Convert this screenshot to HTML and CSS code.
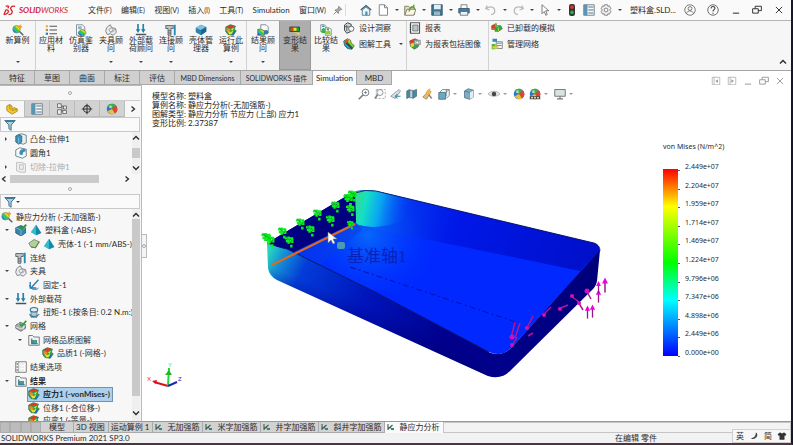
FILE: index.html
```
<!DOCTYPE html>
<html lang="zh-CN">
<head>
<meta charset="utf-8">
<title>SOLIDWORKS Premium 2021</title>
<link rel="stylesheet" href="styles.css">
</head>
<body>
<svg class="defs" aria-hidden="true">
<defs>
<linearGradient id="rainbow" x1="0" y1="1" x2="1" y2="0"><stop offset="0.1" stop-color="#1540e0"/><stop offset="0.35" stop-color="#19c8c0"/><stop offset="0.5" stop-color="#35c82a"/><stop offset="0.7" stop-color="#f5e51c"/><stop offset="0.95" stop-color="#ea2a16"/></linearGradient>
<symbol id="lens" viewBox="0 0 16 16"><circle cx="6" cy="7" r="5" fill="url(#rainbow)" stroke="#7a8a96"/><path d="M10 10l5 5" stroke="#5a6670" stroke-width="2.2"/><path d="M11 1v5M8.500 3.500h5" stroke="#eba51e" stroke-width="2"/></symbol>
<symbol id="material" viewBox="0 0 16 16"><path d="M1 1.500h3v3H1z" fill="#f0b72d"/><path d="M1 6.500h3v3H1z" fill="#b4903c"/><path d="M1 11.500h3v3H1z" fill="#2b83b5"/><path d="M6 3h10M6 8h10M6 13h10" stroke="#555" stroke-width="1.500"/></symbol>
<symbol id="chart" viewBox="0 0 16 16"><path d="M2 1h8l3 3v11H2z" fill="#f5f7f8" stroke="#67757e"/><path d="M4 3h5v4H4z" fill="#86b7d0"/><path d="M4 12c2-5 7-6 9-3l2 3-3 3H7z" fill="url(#rainbow)" stroke="#426a40" stroke-width=".7"/></symbol>
<symbol id="fixture" viewBox="0 0 16 16"><path d="M2 5l5-4 2 4 5 1 1 5-4 4-4-2-4 1-2-4z" fill="#eceeef" stroke="#737b80" stroke-width="1.200"/><path d="M5 7l4-2 2 3-4 3zM7 11l4-1 2-3" fill="none" stroke="#8a9195"/></symbol>
<symbol id="load" viewBox="0 0 16 16"><path d="M4 0v9M11 0v9" stroke="#287fa9" stroke-width="2.200"/><path d="M1 7h6l-3 5zM8 7h6l-3 5z" fill="#287fa9"/><path d="M1 14h14" stroke="#46545c" stroke-width="2"/></symbol>
<symbol id="bolt" viewBox="0 0 16 16"><path d="M1 2h10v4H8v9H4V6H1z" fill="#bcc1c4" stroke="#454d52"/><path d="M4 9h4M4 12h4" stroke="#454d52"/><path d="M13 1v14" stroke="#2a8ab4" stroke-width="2.500"/></symbol>
<symbol id="shell" viewBox="0 0 16 16"><path d="M1 5l7-4 7 3v6l-7 5-7-4z" fill="#2c84ae"/><path d="M1 5l7-4 7 3-7 4z" fill="#83c3df"/><path d="M8 8l7-4v6l-7 5z" fill="#1b668f"/></symbol>
<symbol id="run" viewBox="0 0 16 16"><path d="M1 4l6-3 7 2-2 4 3 2-4 6-7-1-3-4z" fill="#2aa845" stroke="#31694c"/><path d="M2 4l6-3 5 2-6 3z" fill="#e33626"/><path d="M2 5l5 2v4l-5-2z" fill="#f0872a"/><path d="M3 9l4 2 4-2-1 4-4 1z" fill="#e6e22f"/><path d="M8 7l4-2-2 4z" fill="#f4e32c"/><path d="M11 10h3l-3 5-2-1z" fill="#1d6fc0"/></symbol>
<symbol id="advisor" viewBox="0 0 16 16"><path d="M5 1h7l3 3v8H5z" fill="#f8fafb" stroke="#5d7883"/><path d="M1 7h4l5 2v6H1z" fill="url(#rainbow)" stroke="#536d5e"/><circle cx="12" cy="11" r="3" fill="#2e7ea5"/></symbol>
<symbol id="deform" viewBox="0 0 16 16"><path d="M1 4h13v6H1z" fill="#1e9b35" stroke="#333"/><path d="M2 5h4v4H2z" fill="#ef3824"/><path d="M6 5h4v4H6z" fill="#f4e32c"/><path d="M6 11l8 1v3z" fill="#f3d832"/></symbol>
<symbol id="compare" viewBox="0 0 16 16"><path d="M1 1h5l2 2v7H1z" fill="#fff" stroke="#627682"/><path d="M7 5h5l3 2v8H7z" fill="#fff" stroke="#627682"/><path d="M2 7l3-2 2 2v5H2z" fill="#39b24e"/><path d="M8 10l3-2 3 2v4H8z" fill="#9ac93a"/><path d="M3 3h3M9 7h3" stroke="#3086ad" stroke-width="2"/></symbol>
<symbol id="insight" viewBox="0 0 16 16"><path d="M2 4l4-3 5 2-1 10-5 2-3-4z" fill="#cfd4d7" stroke="#44494d" stroke-width="1.300"/><path d="M5 4v8M2 6l8 1" stroke="#44494d"/><circle cx="11" cy="9" r="3.500" fill="#fafafa" stroke="#444"/></symbol>
<symbol id="plot" viewBox="0 0 16 16"><path d="M1 4l5-3 4 2 1 4 4 3-3 5-6-1-4-4z" fill="url(#rainbow)" stroke="#37564a"/><path d="M4 6l8 8" stroke="#34454e" stroke-width="2.500"/><path d="M1 5l5-3 2 2-4 3z" fill="#e74828"/></symbol>
<symbol id="report" viewBox="0 0 16 16"><path d="M2 1h12v14H2z" fill="#fff" stroke="#555" stroke-width="1.500"/><path d="M5 4h7v8H5z" fill="#bcc3c7" stroke="#59656b"/><path d="M1 4h2M1 7h2M1 10h2M1 13h2" stroke="#333"/></symbol>
<symbol id="snap" viewBox="0 0 16 16"><path d="M1 4l7-3 6 3-2 8-5 3-5-4z" fill="#2aa845" stroke="#586d5f"/><path d="M1 4l6-3v5L2 8z" fill="#e33626"/><path d="M2 8l4-2 1 5-4 1z" fill="#f0d62c"/><path d="M7 3h8v6H7z" fill="#d8dcdf" stroke="#777"/><circle cx="11" cy="6" r="2" fill="#fff" stroke="#777"/></symbol>
<symbol id="offload" viewBox="0 0 16 16"><path d="M1 5l6-3v3h6l2 4-6 4v-3H1z" fill="#f4e32c" stroke="#4d6a2c"/><path d="M1 5l5-2v6H1z" fill="#e33626"/><path d="M5 6h4v7H5z" fill="#24a64c"/><path d="M9 5h4l2 4-4 3z" fill="#2da858"/></symbol>
<symbol id="network" viewBox="0 0 16 16"><path d="M2 1h6v4H2z" fill="#2e8bb4"/><path d="M7 5h8v9H7z" fill="#f9fafb" stroke="#5c686e"/><path d="M8 7h6M8 10h6" stroke="#5c686e"/><path d="M1 8h5v7H1z" fill="#52b444"/><path d="M2 11h8v3H2z" fill="#e9ce2d"/></symbol>
<symbol id="home" viewBox="0 0 16 16"><path d="M1 8l7-6 7 6" fill="none" stroke="#345c75" stroke-width="1.600"/><path d="M3 8v7h10V8L8 4z" fill="#eef4f7" stroke="#345c75"/><path d="M7 10h3v5H7z" fill="#4895b8"/></symbol>
<symbol id="doc" viewBox="0 0 16 16"><path d="M3 1h7l4 4v10H3z" fill="#fff" stroke="#60666a"/><path d="M10 1v4h4" fill="none" stroke="#60666a"/></symbol>
<symbol id="open" viewBox="0 0 16 16"><path d="M1 3h5l2 2h6v9H1z" fill="#ece1b7" stroke="#635e4c"/><path d="M4 7h12l-3 8H1z" fill="#fbf8e7" stroke="#635e4c"/><path d="M7 10c0-5 3-7 6-6V1" fill="none" stroke="#5fa42d" stroke-width="2"/></symbol>
<symbol id="save" viewBox="0 0 16 16"><path d="M1 1h14v14H1z" fill="#3b7997" stroke="#27495c"/><path d="M4 1h9v6H4z" fill="#e4edf2"/><path d="M4 10h8v5H4z" fill="#9db5c1"/></symbol>
<symbol id="print" viewBox="0 0 16 16"><path d="M4 1h8v6H4z" fill="#fff" stroke="#54646d"/><path d="M1 6h14v6H1z" fill="#447f9e" stroke="#2f4c5d"/><path d="M3 10h10v5H3z" fill="#edf2f4" stroke="#54646d"/></symbol>
<symbol id="undo" viewBox="0 0 16 16"><path d="M3 2L1 6l5 2M1 6c6-4 12-2 12 3 0 3-2 5-5 5" fill="none" stroke="#b8bbbd" stroke-width="1.700"/></symbol>
<symbol id="redo" viewBox="0 0 16 16"><path d="M13 2l2 4-5 2M15 6C9 2 3 4 3 9c0 3 2 5 5 5" fill="none" stroke="#b8bbbd" stroke-width="1.700"/></symbol>
<symbol id="cursor" viewBox="0 0 16 16"><path d="M4 1v12l3-3 2 5 2-1-2-5h4z" fill="#fff" stroke="#555"/></symbol>
<symbol id="light" viewBox="0 0 16 16"><rect x="4" y="0" width="8" height="16" rx="3" fill="#333"/><circle cx="8" cy="4" r="2.500" fill="#e83328"/><circle cx="8" cy="11" r="2.500" fill="#28ae48"/></symbol>
<symbol id="list" viewBox="0 0 16 16"><path d="M1 1h14v14H1z" fill="#f8fafb" stroke="#4f6571"/><path d="M1 1h5v14H1z" fill="#5a96b4"/><path d="M7 4h7M7 8h7M7 12h7" stroke="#527382" stroke-width="1.400"/></symbol>
<symbol id="gear" viewBox="0 0 16 16"><path d="M6 1h4l.5 2 2-.5 2 3.500-1.500 2 1.500 2-2 3.500-2-.5L10 15H6l-.5-2-2 .5-2-3.500L3 8 1.500 6l2-3.500 2 .5z" fill="#eee" stroke="#666"/><circle cx="8" cy="8" r="2.500" fill="#fff" stroke="#666"/></symbol>
<symbol id="user" viewBox="0 0 16 16"><circle cx="8" cy="8" r="7" fill="none" stroke="#555"/><circle cx="8" cy="6" r="2.500" fill="none" stroke="#555"/><path d="M3.500 13c0-5 9-5 9 0" fill="none" stroke="#555"/></symbol>
<symbol id="help" viewBox="0 0 16 16"><circle cx="8" cy="8" r="7" fill="none" stroke="#444"/><path d="M5.500 6c0-4 5.500-3 5 0-.3 1.500-2.500 2-2.500 4M8 11.500V13" fill="none" stroke="#444" stroke-width="1.500"/></symbol>
<symbol id="min" viewBox="0 0 16 16"><path d="M3 13h10" stroke="currentColor" stroke-width="1.600"/></symbol>
<symbol id="restore" viewBox="0 0 16 16"><path d="M1 6h9v7H1zM5 6V2h10v7h-5" fill="none" stroke="currentColor" stroke-width="1.500"/></symbol>
<symbol id="close" viewBox="0 0 16 16"><path d="M3 3l10 10M13 3L3 13" stroke="currentColor" stroke-width="1.500"/></symbol>
<symbol id="paneL" viewBox="0 0 16 16"><path d="M2 2h12v12H2zM5 2v12" fill="none" stroke="currentColor"/><path d="M11 5v6L7 8z" fill="currentColor"/></symbol>
<symbol id="paneR" viewBox="0 0 16 16"><path d="M2 2h12v12H2zM5 2v12" fill="none" stroke="currentColor"/><path d="M7 5v6l4-3z" fill="currentColor"/></symbol>
<symbol id="pin" viewBox="0 0 16 16"><path d="M9 2l5 5-2 .5-3 3-.5 3L3 8l3-.5 3-3zM5 11l-4 4" fill="#aaa" stroke="#777" stroke-width="1.300"/></symbol>
<symbol id="up" viewBox="0 0 8 8"><path d="M1 5.500L4 2.500l3 3" fill="none" stroke="currentColor" stroke-width="1.400"/></symbol>
<symbol id="down" viewBox="0 0 8 8"><path d="M1 2.500l3 3 3-3" fill="none" stroke="currentColor" stroke-width="1.400"/></symbol>
<symbol id="left" viewBox="0 0 8 8"><path d="M5.500 1.500l-3 2.500 3 2.500" fill="none" stroke="currentColor" stroke-width="1.300"/></symbol>
<symbol id="right" viewBox="0 0 8 8"><path d="M2.500 1.500l3 2.500-3 2.500" fill="none" stroke="currentColor" stroke-width="1.300"/></symbol>
<symbol id="funnel" viewBox="0 0 16 16"><path d="M1 2h14L9.500 8v7l-3-2V8z" fill="#a9d0e1" stroke="#396a83" stroke-width="1.200"/><path d="M2 2h12v2H3z" fill="#3c7d9c"/></symbol>
<symbol id="part" viewBox="0 0 16 16"><path d="M1 4l4-2 3 2v4l3-2 4 2v3l-7 4-7-5z" fill="#f5c62b" stroke="#9f7d1c"/><path d="M5 2v5l3 3 7-2" fill="none" stroke="#9f7d1c"/></symbol>
<symbol id="config" viewBox="0 0 16 16"><path d="M2 1h5v5H2zM2 9h5v6H2zM10 4h4v4h-4zM9 10h5v4H9z" fill="#eee" stroke="#555"/><path d="M7 4h3M8 4v8" stroke="#555"/></symbol>
<symbol id="target" viewBox="0 0 16 16"><circle cx="8" cy="8" r="4.500" fill="none" stroke="#333" stroke-width="1.400"/><path d="M8 1v14M1 8h14" stroke="#333" stroke-width="1.400"/></symbol>
<symbol id="ball" viewBox="0 0 16 16"><circle cx="8" cy="8" r="7" fill="#2f77c6"/><path d="M8 8L2 4c2-4 9-4 11-1z" fill="#38af52"/><path d="M8 8l5-5c4 5 2 9-1 11z" fill="#e3442e"/><path d="M8 8l4 6c-4 2-8 0-10-3z" fill="#efbf2e"/><circle cx="6" cy="5" r="2" fill="#fff" opacity=".55"/></symbol>
<symbol id="boss" viewBox="0 0 16 16"><path d="M5 2l4-1 6 2v10l-4 2-6-2z" fill="#e9eff2" stroke="#4b6572"/><path d="M1 4l4-2 4 2v8l-4 3-4-3z" fill="#3d91b6" stroke="#275c75"/><path d="M5 6v8" stroke="#9acbe0"/></symbol>
<symbol id="fillet" viewBox="0 0 16 16"><path d="M1 4l5-3 9 2v9l-5 3-9-3z" fill="#f7f9fa" stroke="#4a6470"/><path d="M6 7c0-4 5-5 8-4v3c-3 0-4 2-4 5L6 10z" fill="#398fb6"/></symbol>
<symbol id="cut" viewBox="0 0 16 16"><path d="M2 2h7l5 2v11H7l-5-2zM6 5h5v6H6z" fill="#eee" stroke="#b5b5b5"/></symbol>
<symbol id="body" viewBox="0 0 16 16"><path d="M1 5l7-3 6 3v7l-6 4-7-4z" fill="#3688ae" stroke="#234c60"/><path d="M1 5l7 3 6-3M8 8v7" fill="none" stroke="#8fc1d5"/><path d="M6 4l3 3 6-6" fill="none" stroke="#22a13a" stroke-width="2.500"/></symbol>
<symbol id="tetra" viewBox="0 0 16 16"><path d="M8 1l7 11-7 3-7-4z" fill="#36b8cd"/><path d="M8 1v14l7-3z" fill="#1788a5"/></symbol>
<symbol id="sheet" viewBox="0 0 16 16"><path d="M1 7l7-5 7 3-5 8-6-1z" fill="#b2cf9d" stroke="#637f55"/><path d="M4 12l6 1 5-8" fill="none" stroke="#637f55" stroke-width="1.500"/></symbol>
<symbol id="fix" viewBox="0 0 16 16"><path d="M14 1L4 12M3 4v8h8" fill="none" stroke="#287eab" stroke-width="1.800"/><path d="M2 8c1 6 8 8 12 4" fill="none" stroke="#287eab" stroke-width="1.300"/></symbol>
<symbol id="torque" viewBox="0 0 16 16"><path d="M4 6h8v9H4z" fill="#b9c9d2" stroke="#4c626e"/><ellipse cx="8" cy="5" rx="5" ry="3" fill="#e5edf1" stroke="#2a789f" stroke-width="1.500"/><path d="M2 11c2 4 10 4 13 0" fill="none" stroke="#2a789f" stroke-width="1.500"/></symbol>
<symbol id="mesh" viewBox="0 0 16 16"><path d="M1 7l6-4 7 3v5l-6 4-7-4z" fill="#a7acaf" stroke="#555"/><path d="M1 9l7 3 6-4M4 5l7 3v5" stroke="#eee" fill="none"/><path d="M6 5l3 3 6-7" fill="none" stroke="#22a13a" stroke-width="2.300"/></symbol>
<symbol id="folder" viewBox="0 0 16 16"><path d="M1 2h5l2 2h7v11H1z" fill="#f2f3f4" stroke="#565b5f"/><path d="M5 8h7v5H5z" fill="#4d9a8c"/><path d="M5 6v7h8" stroke="#30718d" fill="none" stroke-width="1.500"/></symbol>
<symbol id="options" viewBox="0 0 16 16"><path d="M1 1h14v14H1z" fill="#fff" stroke="#555"/><path d="M5 1v14" stroke="#888"/><path d="M2 4h2M2 8h2M2 12h2" stroke="#444" stroke-width="1.500"/><path d="M7 4h5M7 8h5M7 12h5" stroke="#ccc"/></symbol>
<symbol id="zoomfit" viewBox="0 0 16 16"><circle cx="10" cy="6" r="4.500" fill="#f7fafb" stroke="#767e83" stroke-width="1.300"/><path d="M7 9l-6 6" stroke="#767e83" stroke-width="2.200"/><path d="M8 6h4M10 4v4" stroke="#767e83"/></symbol>
<symbol id="zoomarea" viewBox="0 0 16 16"><path d="M3 2h12v12H3z" fill="none" stroke="#999" stroke-dasharray="3 2"/><circle cx="8" cy="6" r="4" fill="#f7fafb" stroke="#767e83"/><path d="M5 9l-4 5" stroke="#767e83" stroke-width="2"/></symbol>
<symbol id="prev" viewBox="0 0 16 16"><path d="M1 11L12 2l2 2-7 10z" fill="#dce3e6" stroke="#7a8387"/><path d="M7 11h7M10 8l-3 3 3 3" stroke="#3d8ca6" fill="none" stroke-width="1.400"/></symbol>
<symbol id="section" viewBox="0 0 16 16"><path d="M1 4l4-2v10l-4 2zM9 4l5-2v9l-5 3z" fill="#418da5" stroke="#506b77"/><path d="M5 3h4v10H5z" fill="#cad5d9" stroke="#506b77"/></symbol>
<symbol id="dyn" viewBox="0 0 16 16"><path d="M1 12l9-9 2 2-6 10z" fill="#e4bc83" stroke="#907856"/><path d="M9 1l-5 6h4l-2 5 7-7H9l3-4z" fill="#f2b542"/><path d="M9 9l4 5" stroke="#888" stroke-width="2"/></symbol>
<symbol id="orient" viewBox="0 0 16 16"><path d="M2 6l4-4h9v8l-4 4" fill="#f2f5f6" stroke="#5b7480"/><path d="M1 6h9v9H1z" fill="#6aa9c4" stroke="#4a6674"/><path d="M10 6l5-4M11 2v9" fill="none" stroke="#5b7480"/></symbol>
<symbol id="cube" viewBox="0 0 16 16"><path d="M2 4l5-3 7 2v9l-5 3-7-2z" fill="#79b0c8" stroke="#536b76"/><path d="M2 4l7 2 5-3M9 6v9" fill="none" stroke="#536b76"/><path d="M9 6l5-3v9l-5 3z" fill="#e2edf2"/></symbol>
<symbol id="eye" viewBox="0 0 16 16"><path d="M0 8c4-5 12-5 16 0-4 4-12 4-16 0z" fill="#e5e7e8" stroke="#a3a6a8"/><circle cx="8" cy="8" r="3" fill="#424a50"/></symbol>
<symbol id="scene" viewBox="0 0 16 16"><use href="#ball"/><path d="M1 11h14v4H1z" fill="#444"/><path d="M3 13h2M7 13h2M11 13h2" stroke="#fff" stroke-width="2"/></symbol>
<symbol id="screen" viewBox="0 0 16 16"><path d="M1 2h14v9H1z" fill="#dce2e4" stroke="#70777b" stroke-width="1.300"/><path d="M8 11v3M4 14.500h8" stroke="#70777b" stroke-width="1.500"/></symbol>
<symbol id="study" viewBox="0 0 16 16"><path d="M2 2v12M2 12l9-8M6 8l5 6" stroke="#355d55" stroke-width="2.200"/><path d="M8 10h6v4H8z" fill="#2b8b82"/></symbol>
</defs>
</svg>

<div class="app">
  <header class="menubar">
    <svg class="logo" viewBox="0 0 14 13" role="img" aria-label="DS"><path d="M3 2c3-1 4 0 2 2M1 11l2-5c4-1 4 4-2 5M13 2c-4-1-6 2-4 4s1 5-3 5" fill="none" stroke="#d5202b" stroke-width="1.400"/></svg>
    <span class="brand"><b>SOLID</b>WORKS</span>
    <nav class="menus">
      <button>文件<small>(F)</small></button><button>编辑<small>(E)</small></button><button>视图<small>(V)</small></button><button>插入<small>(I)</small></button><button>工具<small>(T)</small></button><button>Simulation</button><button>窗口<small>(W)</small></button>
    </nav>
    <svg class="i10"><use href="#pin"/></svg>
    <div class="quick">
      <button aria-label="主页"><svg class="i12"><use href="#home"/></svg></button>
      <button class="drop" aria-label="新建"><svg class="i12"><use href="#doc"/></svg></button>
      <button class="drop" aria-label="打开"><svg class="i12"><use href="#open"/></svg></button>
      <button class="drop" aria-label="保存"><svg class="i12"><use href="#save"/></svg></button>
      <button class="drop" aria-label="打印"><svg class="i12"><use href="#print"/></svg></button>
      <button class="drop" aria-label="撤销"><svg class="i12"><use href="#undo"/></svg></button>
      <button class="drop" aria-label="重做"><svg class="i12"><use href="#redo"/></svg></button>
      <button class="drop" aria-label="选择"><svg class="i12"><use href="#cursor"/></svg></button>
      <button aria-label="重建模型"><svg class="i12"><use href="#light"/></svg></button>
      <button aria-label="文件属性"><svg class="i12"><use href="#list"/></svg></button>
      <button class="drop" aria-label="选项"><svg class="i12"><use href="#gear"/></svg></button>
    </div>
    <span class="filename">塑料盒.SLD...</span>
    <div class="window">
      <button aria-label="用户"><svg class="i12"><use href="#user"/></svg></button>
      <button aria-label="帮助"><svg class="i12"><use href="#help"/></svg></button>
      <button aria-label="最小化"><svg class="i10"><use href="#min"/></svg></button>
      <button aria-label="还原"><svg class="i10"><use href="#restore"/></svg></button>
      <button aria-label="关闭"><svg class="i10"><use href="#close"/></svg></button>
    </div>
  </header>

  <section class="ribbon" aria-label="Simulation">
    <div class="group first">
      <button class="tool more"><svg class="i12"><use href="#lens"/></svg><span>新算例</span></button>
    </div>
    <div class="group">
      <button class="tool"><svg class="i12"><use href="#material"/></svg><span>应用材料</span></button>
      <button class="tool"><svg class="i12"><use href="#chart"/></svg><span>仿真鉴别器</span></button>
      <button class="tool more"><svg class="i12"><use href="#fixture"/></svg><span>夹具顾问</span></button>
      <button class="tool more"><svg class="i12"><use href="#load"/></svg><span>外部载荷顾问</span></button>
      <button class="tool more"><svg class="i12"><use href="#bolt"/></svg><span>连接顾问</span></button>
      <button class="tool"><svg class="i12"><use href="#shell"/></svg><span>壳体管理器</span></button>
      <button class="tool more"><svg class="i12"><use href="#run"/></svg><span>运行此算例</span></button>
    </div>
    <div class="group last">
      <button class="tool more"><svg class="i12"><use href="#advisor"/></svg><span>结果顾问</span></button>
      <button class="tool on"><svg class="i12"><use href="#deform"/></svg><span>变形结果</span></button>
      <button class="tool"><svg class="i12"><use href="#compare"/></svg><span>比较结果</span></button>
      <div class="pair">
        <button><svg class="i12"><use href="#insight"/></svg>设计洞察</button>
        <button class="drop"><svg class="i12"><use href="#plot"/></svg>图解工具</button>
      </div>
    </div>
    <div class="group pair wide">
      <button><svg class="i12"><use href="#report"/></svg>报表</button>
      <button><svg class="i12"><use href="#snap"/></svg>为报表包括图像</button>
    </div>
    <div class="pair">
      <button><svg class="i12"><use href="#offload"/></svg>已卸载的模拟</button>
      <button><svg class="i12"><use href="#network"/></svg>管理网络</button>
    </div>
    <button class="collapse" aria-label="折叠"><svg class="i8"><use href="#up"/></svg></button>
  </section>

  <div class="tabrow">
    <nav class="tabs">
      <button>特征</button><button>草图</button><button>曲面</button><button>标注</button><button>评估</button><button class="t-dim">MBD Dimensions</button><button class="t-add">SOLIDWORKS 插件</button><button class="t-sim on">Simulation</button><button>MBD</button>
    </nav>
    <div class="docwin">
      <button aria-label="左窗格"><svg class="i10"><use href="#paneL"/></svg></button>
      <button aria-label="右窗格"><svg class="i10"><use href="#paneR"/></svg></button>
      <button aria-label="最小化文档"><svg class="i10"><use href="#min"/></svg></button>
      <button aria-label="还原文档"><svg class="i10"><use href="#restore"/></svg></button>
      <button aria-label="关闭文档"><svg class="i10"><use href="#close"/></svg></button>
    </div>
  </div>

  <main class="work">
    <aside class="side">
      <div class="grip"><i></i></div>
      <nav class="modes">
        <button class="on" aria-label="特征树"><svg class="i12"><use href="#part"/></svg></button>
        <button aria-label="属性"><svg class="i12"><use href="#list"/></svg></button>
        <button aria-label="配置"><svg class="i12"><use href="#config"/></svg></button>
        <button aria-label="尺寸"><svg class="i12"><use href="#target"/></svg></button>
        <button aria-label="外观"><svg class="i12"><use href="#ball"/></svg></button>
        <button class="next" aria-label="更多"><svg class="i8"><use href="#right"/></svg></button>
      </nav>
      <label class="filter"><svg class="i12"><use href="#funnel"/></svg><input type="text" aria-label="过滤特征"></label>
      <div class="pane upper">
        <ul class="tree">
          <li class="l1 shut"><svg class="i12"><use href="#boss"/></svg>凸台-拉伸1</li>
          <li class="l1"><svg class="i12"><use href="#fillet"/></svg>圆角1</li>
          <li class="l1 shut dim"><svg class="i12"><use href="#cut"/></svg>切除-拉伸1</li>
        </ul>
        <div class="vscroll"><svg class="i8"><use href="#up"/></svg><i></i><svg class="i8"><use href="#down"/></svg></div>
      </div>
      <div class="hscroll"><svg class="i8"><use href="#left"/></svg><i></i><svg class="i8"><use href="#right"/></svg></div>
      <div class="grip slim"><i></i></div>
      <label class="filter drop"><svg class="i12"><use href="#funnel"/></svg><input type="text" aria-label="过滤算例"></label>
      <div class="pane lower">
        <ul class="tree">
          <li><svg class="i12"><use href="#lens"/></svg>静应力分析 (-无加强筋-)</li>
          <li class="l1 open"><svg class="i12"><use href="#body"/></svg><svg class="i12"><use href="#tetra"/></svg>塑料盒 (-ABS-)</li>
          <li class="l2"><svg class="i12"><use href="#sheet"/></svg><svg class="i12"><use href="#tetra"/></svg>壳体-1 (-1 mm/ABS-)</li>
          <li class="l1"><svg class="i12"><use href="#bolt"/></svg>连结</li>
          <li class="l1 open"><svg class="i12"><use href="#fixture"/></svg>夹具</li>
          <li class="l2"><svg class="i12"><use href="#fix"/></svg>固定-1</li>
          <li class="l1 open"><svg class="i12"><use href="#load"/></svg>外部载荷</li>
          <li class="l2"><svg class="i12"><use href="#torque"/></svg>扭矩-1 (:按条目: 0.2 N.m:)</li>
          <li class="l1 open"><svg class="i12"><use href="#mesh"/></svg>网格</li>
          <li class="l2 open"><svg class="i12"><use href="#folder"/></svg>网格品质图解</li>
          <li class="l3"><svg class="i12"><use href="#run"/></svg>品质1 (-网格-)</li>
          <li class="l1"><svg class="i12"><use href="#options"/></svg>结果选项</li>
          <li class="l1 open bold"><svg class="i12"><use href="#folder"/></svg>结果</li>
          <li class="l2 bold"><span class="sel"><svg class="i12"><use href="#run"/></svg>应力1 (-vonMises-)</span></li>
          <li class="l2"><svg class="i12"><use href="#run"/></svg>位移1 (-合位移-)</li>
          <li class="l2"><svg class="i12"><use href="#run"/></svg>应变1 (-等量-)</li>
        </ul>
        <div class="vscroll"><svg class="i8"><use href="#up"/></svg><i></i><svg class="i8"><use href="#down"/></svg></div>
      </div>
    </aside>

    <section class="view">
      <button class="handle" aria-label="收起面板"><i></i></button>
      <svg class="model" viewBox="142 85 649 336" role="img" aria-label="塑料盒应力云图">
        <defs>
          <linearGradient id="front" gradientUnits="userSpaceOnUse" x1="267" y1="255" x2="440" y2="345"><stop offset="0" stop-color="#27d5bd"/><stop offset=".07" stop-color="#1593d6"/><stop offset=".2" stop-color="#033cd8"/><stop offset=".55" stop-color="#0015bc"/><stop offset="1" stop-color="#00008c"/></linearGradient>
          <linearGradient id="shade" gradientUnits="userSpaceOnUse" x1="375" y1="308" x2="364" y2="336"><stop offset="0" stop-color="#000090" stop-opacity="0"/><stop offset="1" stop-color="#00006c" stop-opacity=".6"/></linearGradient>
          <linearGradient id="hot" gradientUnits="userSpaceOnUse" x1="354" y1="200" x2="412" y2="214"><stop offset="0" stop-color="#3ad98a"/><stop offset=".2" stop-color="#14e0c4"/><stop offset=".45" stop-color="#0abcf0" stop-opacity=".8"/><stop offset="1" stop-color="#0030ff" stop-opacity="0"/></linearGradient>
          <radialGradient id="glow" gradientUnits="userSpaceOnUse" cx="368" cy="235" r="75"><stop offset="0" stop-color="#0a7cf8" stop-opacity=".75"/><stop offset="1" stop-color="#0030ff" stop-opacity="0"/></radialGradient>
          <linearGradient id="wall" gradientUnits="userSpaceOnUse" x1="360" y1="200" x2="600" y2="262"><stop offset="0" stop-color="#0547f2"/><stop offset=".4" stop-color="#0018e8"/><stop offset="1" stop-color="#000fc8"/></linearGradient>
          <linearGradient id="end" gradientUnits="userSpaceOnUse" x1="490" y1="365" x2="598" y2="262"><stop offset="0" stop-color="#00008c"/><stop offset="1" stop-color="#000078"/></linearGradient>
          <symbol id="clamp" viewBox="0 0 12 14"><path d="M1 3h9M5 1v8M2 6h8M9 3v5M8 10v3" stroke="#0bec20" stroke-width="2.600"/><path d="M2 1l4 4M9 5l-3 4" stroke="#079d16" stroke-width="1"/></symbol>
          <symbol id="force" viewBox="0 0 8 16"><path d="M4 5v10" stroke="#9a168f" stroke-width="1.500"/><path d="M4 0l3 6H1z" fill="#ec00df"/></symbol>
        </defs>
        <path d="M267 243L350 194Q360 189 376 191L594 243Q600 245 600 251L512 347Q502 358 489 352Z" fill="#0028ff"/>
        <path d="M356 191Q367 189 376 191L594 243Q600 245 599 251L580 271L430 240Q380 232 357 222Z" fill="url(#wall)"/>
        <path d="M267 243L350 194Q360 189 376 191L500 220L480 300L370 290Z" fill="url(#glow)"/>
        <path d="M354 192Q367 189 376 191L420 201L410 218Q378 232 356 224Z" fill="url(#hot)"/>
        <path d="M267 243L350 194L355 193L356 222L292 253Z" fill="#000080"/>
        <path d="M292 253L356 222L362 230L320 265Z" fill="#0840df" opacity=".5"/>
        <path d="M267 243Q278 248 287 249L375 292L489 352L488 376L277 280Q269 276 268 268Z" fill="url(#front)"/>
        <path d="M269 267L489 352L488 376L277 280Q271 277 269 267Z" fill="url(#shade)"/>
        <path d="M488 352Q502 358 512 347L600 250L597 281Q596 287 590 292L510 371Q501 380 488 376Z" fill="url(#end)"/>
        <path d="M355 193Q365 189 376 191L594 243Q600 245 600 251M267 243L287 249L375 292L489 352" fill="none" stroke="#071356" stroke-width=".8"/>
        <path d="M350 267L516 322" stroke="#0710b0" stroke-dasharray="6 3 2 3"/>
        <path d="M272 265L355 224" stroke="#d96b20" stroke-width="2.200"/>
        <g><use href="#clamp" x="260" y="232" width="13" height="14"/><use href="#clamp" x="265" y="235" width="11" height="13"/><use href="#clamp" x="277" y="226" width="11" height="14"/><use href="#clamp" x="284" y="235" width="11" height="14"/><use href="#clamp" x="295" y="217" width="11" height="14"/><use href="#clamp" x="305" y="224" width="11" height="14"/><use href="#clamp" x="312" y="208" width="11" height="14"/><use href="#clamp" x="325" y="214" width="11" height="14"/><use href="#clamp" x="330" y="200" width="11" height="14"/><use href="#clamp" x="342" y="193" width="13" height="14"/><use href="#clamp" x="347" y="189" width="11" height="14"/><use href="#clamp" x="345" y="204" width="11" height="13"/><use href="#clamp" x="344" y="220" width="13" height="10"/></g>
        <text class="axis" x="347" y="262">基准轴1</text>
        <rect x="337" y="242" width="8" height="7" rx="2" fill="#4e9ab0"/>
        <path d="M328 232v11l3-3 2 4 2-1-2-4h4z" fill="#fff" stroke="#777" stroke-width=".6"/>
        <g><use href="#force" x="584" y="304" width="7" height="17"/><use href="#force" x="589" y="303" width="7" height="17"/><use href="#force" x="595" y="288" width="7" height="17"/><use href="#force" x="601" y="277" width="8" height="17"/><use href="#force" x="595" y="281" width="7" height="13"/></g>
        <g stroke="#b41494" stroke-width="1.500"><path d="M586 290l5 9M577 300l6 10M571 296l8 6M558 309l10-4M543 315l8-8M527 328l6-12M511 338l4-16M515 338l5-15M512 346l5-9M528 336l5-3"/></g>
        <g fill="#d011b6"><circle cx="587" cy="291" r="2.500"/><circle cx="579" cy="303" r="2"/><circle cx="572" cy="296" r="2"/><circle cx="560" cy="309" r="2"/><circle cx="544" cy="315" r="2"/><circle cx="527" cy="328" r="2"/><circle cx="512" cy="337" r="2.500"/><circle cx="512" cy="345" r="2"/></g>
        <g stroke-width="2"><path d="M168 386l-14-4" stroke="#d9121a"/><path d="M168 386l1-18" stroke="#27d532"/><path d="M168 386l9-4" stroke="#1a26b5"/></g>
        <path d="M165 375l4-5 3 5z" fill="#20b52a"/><path d="M152 381l5-1-1 4z" fill="#d9121a"/>
        <g class="axes"><text x="147" y="381" fill="#e02525">X</text><text x="168" y="367" fill="#3be246">Y</text><text x="178" y="381" fill="#1c24c0">Z</text></g>
      </svg>
      <div class="info"><p>模型名称: 塑料盒</p><p>算例名称: 静应力分析(-无加强筋-)</p><p>图解类型: 静应力分析 节应力 (上部) 应力1</p><p>变形比例: 2.37387</p></div>
      <div class="hud">
        <button aria-label="整屏显示"><svg class="i12"><use href="#zoomfit"/></svg></button>
        <button aria-label="局部放大"><svg class="i12"><use href="#zoomarea"/></svg></button>
        <button aria-label="上一视图"><svg class="i12"><use href="#prev"/></svg></button>
        <button aria-label="剖面视图"><svg class="i12"><use href="#section"/></svg></button>
        <button aria-label="动态注解"><svg class="i12"><use href="#dyn"/></svg></button>
        <button class="drop" aria-label="视图定向"><svg class="i12"><use href="#orient"/></svg></button>
        <button class="drop" aria-label="显示样式"><svg class="i12"><use href="#cube"/></svg></button>
        <button class="drop" aria-label="隐藏项目"><svg class="i12"><use href="#eye"/></svg></button>
        <button aria-label="编辑外观"><svg class="i12"><use href="#ball"/></svg></button>
        <button class="drop" aria-label="应用布景"><svg class="i12"><use href="#scene"/></svg></button>
        <button class="drop" aria-label="视图设定"><svg class="i12"><use href="#screen"/></svg></button>
      </div>
      <div class="legend">
        <p>von Mises (N/m^2)</p>
        <div class="scale"><div class="ramp"></div>
          <ol><li>2.449e+07</li><li>2.204e+07</li><li>1.959e+07</li><li>1.714e+07</li><li>1.469e+07</li><li>1.224e+07</li><li>9.796e+06</li><li>7.347e+06</li><li>4.898e+06</li><li>2.449e+06</li><li>0.000e+00</li></ol>
        </div>
      </div>
    </section>
  </main>

  <nav class="sheets">
    <div class="pager"><i></i><i></i><i></i><i></i></div>
    <button class="plain">模型</button><button>3D 视图</button><button>运动算例 1</button>
    <button><svg class="i8"><use href="#study"/></svg>无加强筋</button>
    <button><svg class="i8"><use href="#study"/></svg>米字加强筋</button>
    <button><svg class="i8"><use href="#study"/></svg>井字加强筋</button>
    <button><svg class="i8"><use href="#study"/></svg>斜井字加强筋</button>
    <button class="on"><svg class="i8"><use href="#study"/></svg>静应力分析</button>
    <div class="track"></div>
  </nav>
  <footer class="status">
    <span>SOLIDWORKS Premium 2021 SP3.0</span>
    <span class="mode">在编辑 零件</span>
  </footer>
  <div class="ime"><span>英</span><svg class="i10" viewBox="0 0 16 16"><path d="M11 2a6 6 0 1 1-8 9c5 1 8-3 8-9z" fill="#444"/></svg><span>简</span><svg class="i10" viewBox="0 0 16 16"><path d="M5 2l-4 3 2 3 1-1v7h8V7l1 1 2-3-4-3c-1 2-5 2-6 0z" fill="#333"/></svg></div>
</div>
</body>
</html>
```
FILE: styles.css
```
* { box-sizing: border-box; }

html, body { height: 100%; }

body {
  margin: 0;
  font: 8px/10px Lato, "Noto Sans CJK SC", sans-serif;
  color: #2b2b2b;
  background: #17172b;
}

button {
  display: flex;
  align-items: center;
  justify-content: center;
  padding: 0;
  border: 0;
  background: none;
  font: inherit;
  color: inherit;
  white-space: nowrap;
}

p, ul, ol { margin: 0; padding: 0; list-style: none; }

.defs { position: absolute; width: 0; height: 0; }
.i8 { width: 8px; height: 8px; flex: none; }
.i10 { width: 10px; height: 10px; flex: none; }
.i12 { width: 12px; height: 12px; flex: none; }

.drop::after,
.more::after {
  content: "";
  border: 2px solid transparent;
  border-top-color: #444;
  border-bottom: 0;
}

.app {
  position: relative;
  display: flex;
  flex-direction: column;
  height: 100vh;
  border-right: 2px solid #17172b;
  border-bottom: 2px solid #4a3540;
  background: #f4f4f4;
  overflow: hidden;
}

/* Title and menu bar */
.menubar {
  display: flex;
  align-items: center;
  flex: none;
  height: 21px;
  padding: 0 7px 0 3px;
  border-bottom: 1px solid #b4b4b4;
  background: #fafafa;
}
.logo { width: 13px; height: 13px; flex: none; margin-right: 3px; }
.brand { width: 69px; flex: none; color: #d5202b; font-style: italic; }
.menus { display: flex; width: 238px; flex: none; justify-content: space-between; margin-right: 7px; }
.menus small { font-size: 7px; }
.quick {
  display: flex;
  flex: none;
  gap: 5px;
  margin-left: 2px;
  padding-left: 14px;
  border-left: 1px solid #ddd;
}
.quick .drop { gap: 6px; }
.filename { margin-left: 8px; }
.window { display: flex; flex: 1; justify-content: space-between; margin-left: 8px; }

/* Command ribbon */
.ribbon {
  display: flex;
  flex: none;
  height: 50px;
  border-bottom: 1px solid #a5a5a5;
  background: #f6f6f6;
}
.group { display: flex; border-right: 1px solid #d2d2d2; }
.group.first { width: 36px; justify-content: center; }
.group.last { width: 160px; }
.tool {
  position: relative;
  flex-direction: column;
  justify-content: flex-start;
  width: 30px;
  padding-top: 3px;
  line-height: 8px;
  white-space: normal;
}
.tool.on { width: 32px; background: #adadad; border: 1px solid #999; border-top: 0; }
.tool span { width: 30px; text-align: center; word-break: break-all; }
.tool.more::after { position: absolute; bottom: 7px; }
.first .tool, .last .tool:first-child { width: 32px; }
.pair { display: flex; flex-direction: column; gap: 4px; padding: 1px 0 0 2px; }
.pair button { height: 12px; justify-content: flex-start; gap: 4px; }
.pair .drop::after { margin-left: 4px; }
.group.wide { width: 82px; }
.collapse { margin-left: auto; padding: 0 4px 4px; align-items: flex-end; }

/* Command tabs */
.tabrow { display: flex; flex: none; height: 14px; background: #fff; }
.tabs { display: flex; }
.tabs button {
  width: 35px;
  border: 1px solid #a8a8a8;
  border-width: 0 1px 1px 0;
  background: #d0d0d0;
}
.tabs .t-dim { width: 66px; font-size: 7px; }
.tabs .t-add { width: 72px; font-size: 7px; }
.tabs .t-sim { width: 44px; }
.tabs .on { background: #fafafa; border-bottom: 0; }
.docwin { display: flex; gap: 6px; margin-left: auto; padding: 5px 6px 0 0; color: #999; }

/* Side panel */
.work { display: flex; flex: 1; min-height: 0; background: #fff; }
.side {
  display: flex;
  flex-direction: column;
  width: 142px;
  flex: none;
  padding-right: 1px;
  border: 1px solid #b9b9b9;
  border-left: 0;
  border-bottom: 0;
  background: #f7f7f7;
}
.grip { display: flex; flex: none; height: 14px; align-items: center; justify-content: center; }
.grip.slim { height: 10px; }
.grip i, .handle i { width: 4px; height: 4px; border: 1px solid #aaa; border-radius: 2px; }
.modes { display: flex; flex: none; height: 17px; border-top: 1px solid #ccc; }
.modes button { width: 25px; border: 1px solid #bbb; border-width: 0 1px 1px 0; background: #d2d2d2; }
.modes .on { background: #f7f7f7; border-bottom: 0; }
.modes .next { width: auto; flex: 1; border: 0; background: none; }
.filter {
  display: flex;
  align-items: center;
  flex: none;
  height: 15px;
  padding-left: 3px;
  border: 1px solid #c9c9c9;
  background: #fafafa;
}
.filter input { order: 2; flex: 1; min-width: 0; border: 0; padding: 0; height: 10px; background: none; }
.pane { display: flex; min-height: 0; }
.upper { height: 42px; flex: none; }
.lower { flex: 1; }
.tree { display: grid; flex: 1; min-width: 0; overflow: hidden; }
.upper .tree { grid-template-rows: repeat(3, 1fr); }
.lower .tree { grid-template-rows: repeat(15, minmax(0, 1fr)) 6px; padding-top: 1px; }
.tree li { display: flex; align-items: center; gap: 3px; padding-left: 1px; white-space: nowrap; min-height: 0; }
.tree .l1 { padding-left: 15px; }
.tree .l2 { padding-left: 28px; }
.tree .l3 { padding-left: 42px; }
.tree .shut::before, .tree .open::before {
  content: "";
  border: 2px solid transparent;
  border-left-color: #444;
  border-right: 0;
  margin: 0 5px 0 -10px;
}
.tree .open::before { border: 2px solid transparent; border-top-color: #444; border-bottom: 0; margin: 0 3px 0 -10px; }
.tree .dim { color: #aaa; }
.tree .bold { font-weight: bold; }
.lower li:last-child { align-items: flex-start; overflow: hidden; }
.sel { display: flex; align-items: center; gap: 3px; height: 13px; padding-right: 2px; background: #add0ec; outline: 1px solid #6d94b5; }
.vscroll { display: flex; flex-direction: column; align-items: center; width: 8px; flex: none; background: #efefef; }
.vscroll i { width: 8px; background: #c9c9c9; }
.upper .vscroll { justify-content: space-between; padding: 2px 0; }
.upper .vscroll i { height: 10px; }
.lower .vscroll { padding: 2px 0 4px; justify-content: space-between; }
.lower .vscroll i { height: 86%; margin-bottom: auto; }
.hscroll { display: flex; align-items: center; flex: none; height: 10px; padding-right: 9px; }
.hscroll i { width: 68%; height: 8px; margin: 0 auto 0 2px; background: #cbcbcb; }

/* Graphics area */
.view { position: relative; flex: 1; min-width: 0; background: #fff; }
.model { display: block; width: 100%; height: 100%; }
.axis { font: 17px "Liberation Serif", "Noto Sans CJK SC", serif; fill: #0a22b8; }
.axes { font: 6px "Liberation Sans", sans-serif; }
.handle { position: absolute; left: 0; top: 149px; width: 5px; height: 24px; border: 1px solid #bbb; border-left: 0; background: #f5f5f5; }
.info { position: absolute; left: 10px; top: 7px; line-height: 9px; color: #222; }
.hud { position: absolute; left: 216px; top: 3px; display: flex; gap: 4px; }
.hud .drop { gap: 3px; margin-right: 2px; }
.hud .drop::after { border-top-color: #999; }
.legend { position: absolute; right: 64px; top: 57px; width: 64px; font: 7px/10px "Noto Sans", sans-serif; white-space: nowrap; }
.scale { display: flex; gap: 7px; padding-top: 10px; }
.ramp {
  width: 15px;
  height: 187px;
  margin-top: 7px;
  background: linear-gradient(#f00 0%, #ff8000 10%, #ff0 20%, #7fff00 35%, #0f0 50%, #00ff80 60%, #0ff 70%, #0080ff 85%, #00f 100%);
}
.legend ol { display: flex; flex-direction: column; justify-content: space-between; height: 196px; }
.legend li { position: relative; }
.legend li::before { content: ""; position: absolute; left: -7px; top: 8px; width: 2px; border-top: 1px solid #555; }

/* Study tabs and status bar */
.sheets { display: flex; flex: none; height: 12px; border-top: 1px solid #999; background: #f3f3f3; }
.sheets button { gap: 4px; padding: 0 3px 0 2px; border-right: 1px solid #aaa; border-bottom: 1px solid #aaa; background: #d2d2d2; }
.sheets .plain { padding: 0 8px; }
.sheets .on { background: #fafafa; border-color: #fafafa; }
.pager { display: flex; width: 41px; background: #bcbcbc; }
.pager i { flex: 1; border: 1px solid #adadad; }
.track { flex: 1; border: 1px solid #c5c5c5; }
.status { display: flex; align-items: center; justify-content: space-between; flex: none; height: 10px; padding: 0 134px 0 1px; background: #f2f2f2; }
.ime { position: absolute; right: 0; bottom: 0; display: flex; align-items: center; gap: 5px; height: 14px; padding: 0 3px; border: 1px solid #d0d0d0; background: #f7f7f7; }
```
